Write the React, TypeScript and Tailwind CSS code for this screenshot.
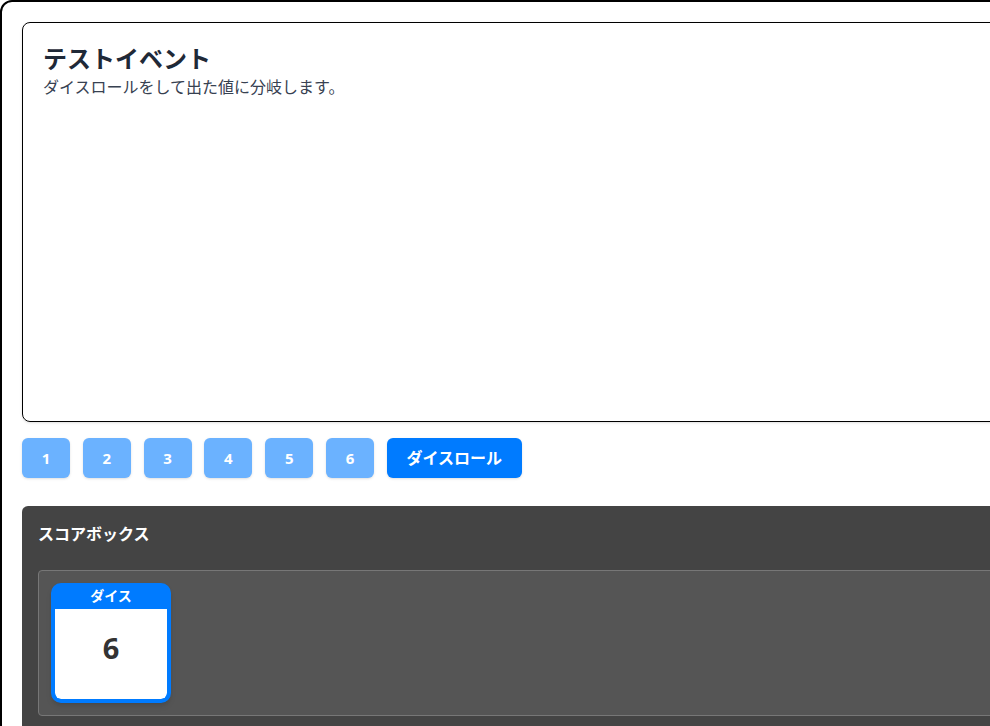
const FONT = "font-['Noto_Sans','Noto_Sans_CJK_JP',sans-serif]";

const Choice = ({ label }: { label: string }) => (
  <button className="h-10 w-12 rounded-md bg-[#6bb2ff] text-[15px] font-bold text-white shadow-sm">
    {label}
  </button>
);

const ScoreCard = ({ name, value }: { name: string; value: number }) => (
  <div className="flex h-[120px] w-[120px] flex-col overflow-hidden rounded-[10px] border-4 border-[#007bff] bg-[#007bff] shadow-md">
    <div className="flex h-[22px] items-center justify-center pb-1 text-sm font-bold text-white">
      {name}
    </div>
    <div className="flex flex-1 items-center justify-center rounded-b-[6px] bg-white pb-3 text-[29px] font-bold text-[#333]">
      {value}
    </div>
  </div>
);

export default function App() {
  return (
    <div className={`h-screen w-screen overflow-hidden bg-white ${FONT}`}>
      <div className="w-[1100px] rounded-[12px] border-2 border-black p-5">
        <div className="h-[400px] rounded-lg border border-black px-5 pt-5 shadow-sm">
          <h1 className="text-2xl font-bold leading-8 text-[#1f2937]">テストイベント</h1>
          <p className="text-base leading-6 text-[#374151]">ダイスロールをして出た値に分岐します。</p>
        </div>
        <div className="mt-4 flex gap-[12.8px]">
          {["1", "2", "3", "4", "5", "6"].map((n) => (
            <Choice key={n} label={n} />
          ))}
          <button className="h-10 w-[135px] rounded-md bg-[#007bff] text-base font-bold text-white shadow-sm">
            ダイスロール
          </button>
        </div>
        <div className="mt-7 rounded-t-md bg-[#444] px-4 pb-4 pt-4">
          <h2 className="text-base font-bold leading-6 text-white">スコアボックス</h2>
          <div className="mt-6 h-[146px] rounded border border-[#777] bg-[#555] p-3">
            <ScoreCard name="ダイス" value={6} />
          </div>
        </div>
      </div>
    </div>
  );
}
